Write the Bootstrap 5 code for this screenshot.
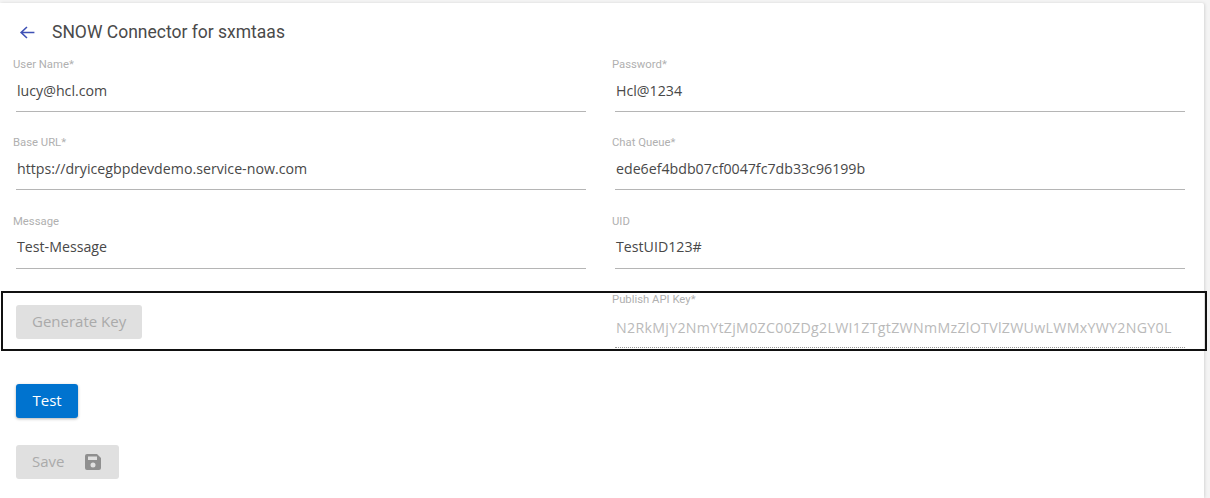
<!DOCTYPE html>
<html lang="en">
<head>
<meta charset="utf-8">
<title>SNOW Connector</title>
<link href="https://cdn.jsdelivr.net/npm/bootstrap@5.3.0/dist/css/bootstrap.min.css" rel="stylesheet">
<style>
html,body{height:498px;overflow:hidden;background:#f4f4f4}
body{padding:3px 6px 0 0;font-family:"Open Sans","Liberation Sans",sans-serif}
.sheet{height:495px;background:#fff;box-shadow:1px 0 3px rgba(0,0,0,.12);padding:0 19px 0 13px;border-radius:0 2px 0 0}
.head-line{height:54.5px;padding:18px 0 0 6px;gap:16px;font:17.5px/22px Roboto,sans-serif;color:#4a4a4a}
.head-line svg{width:17px;height:17px;color:#3f51b5;margin-top:3px}
.form-cols{display:grid;grid-template-columns:573px 573px;column-gap:26px;row-gap:0}
.fld{height:78.4px;padding-top:1.5px}
.fld label{display:block;font:11.3px/12px Roboto,sans-serif;color:#b0b0b0;margin-bottom:8.5px;height:12px}
.fld-val{margin-left:3px;height:32.5px;border-bottom:1px solid #b5b5b5;padding:1px 0 0 1px;font-size:14.2px;line-height:20px;color:#484848;white-space:nowrap;overflow:hidden}
.key-box{border:2px solid #111;height:60px;margin:-2px -22px 0 -12px;padding:0 0 0 10px;display:grid;grid-template-columns:573px 573px;column-gap:26px}
.key-box .fld{height:auto;padding-top:1px}
.key-box label{margin-bottom:11px}
.key-box .fld-val{color:#bababa;border-bottom:1px dotted #999;height:31px;letter-spacing:.3px}
.act{font-family:"Open Sans","Liberation Sans",sans-serif;font-size:15px;line-height:20px;border-radius:3px;border:0;padding:6px 16px 8px;height:34px}
.act:disabled{background:#e0e0e0;color:#aaa;opacity:1}
.go{background:#0073cf;color:#fff;box-shadow:0 1px 3px rgba(0,0,0,.3);padding-left:16.5px;padding-right:16.5px}
.go:hover{background:#0073cf;color:#fff}
.gen-wrap{padding:12px 0 0 3px}
.act-stack{padding:33px 0 0 3px;gap:27px}
.act svg{width:18px;height:18px;color:#8f8f8f;margin-left:20px;margin-right:1px;vertical-align:-4px}
</style>
</head>
<body>
<div class="sheet">
  <div class="d-flex align-items-start head-line">
    <svg viewBox="0 0 16 16" fill="none" stroke="currentColor" stroke-width="1.5" aria-hidden="true"><path d="M14.500 8H2M7.500 2.800 2 8l5.500 5.200"/></svg>
    <span>SNOW Connector for sxmtaas</span>
  </div>
  <div class="form-cols">
    <div class="fld"><label>User Name*</label><div class="fld-val">lucy@hcl.com</div></div>
    <div class="fld"><label>Password*</label><div class="fld-val">Hcl@1234</div></div>
    <div class="fld"><label>Base URL*</label><div class="fld-val">https://dryicegbpdevdemo.service-now.com</div></div>
    <div class="fld"><label>Chat Queue*</label><div class="fld-val">ede6ef4bdb07cf0047fc7db33c96199b</div></div>
    <div class="fld"><label>Message</label><div class="fld-val">Test-Message</div></div>
    <div class="fld"><label>UID</label><div class="fld-val">TestUID123#</div></div>
  </div>
  <div class="key-box">
    <div class="gen-wrap"><button class="btn act" type="button" disabled>Generate Key</button></div>
    <div class="fld"><label>Publish API Key*</label><div class="fld-val">N2RkMjY2NmYtZjM0ZC00ZDg2LWI1ZTgtZWNmMzZlOTVlZWUwLWMxYWY2NGY0L</div></div>
  </div>
  <div class="d-flex flex-column align-items-start act-stack">
    <button class="btn act go" type="button">Test</button>
    <button class="btn act" type="button" disabled>Save<svg viewBox="0 0 18 18" fill="currentColor" aria-hidden="true"><path fill-rule="evenodd" d="M3 1h10l4 4v10a2 2 0 0 1-2 2H3a2 2 0 0 1-2-2V3a2 2 0 0 1 2-2Zm1 2.500v3.500h9V3.500ZM9 9.500a2.500 2.500 0 1 0 0 5 2.500 2.500 0 0 0 0-5Z"/></svg></button>
  </div>
</div>
<script src="https://cdn.jsdelivr.net/npm/bootstrap@5.3.0/dist/js/bootstrap.bundle.min.js"></script>
</body>
</html>
